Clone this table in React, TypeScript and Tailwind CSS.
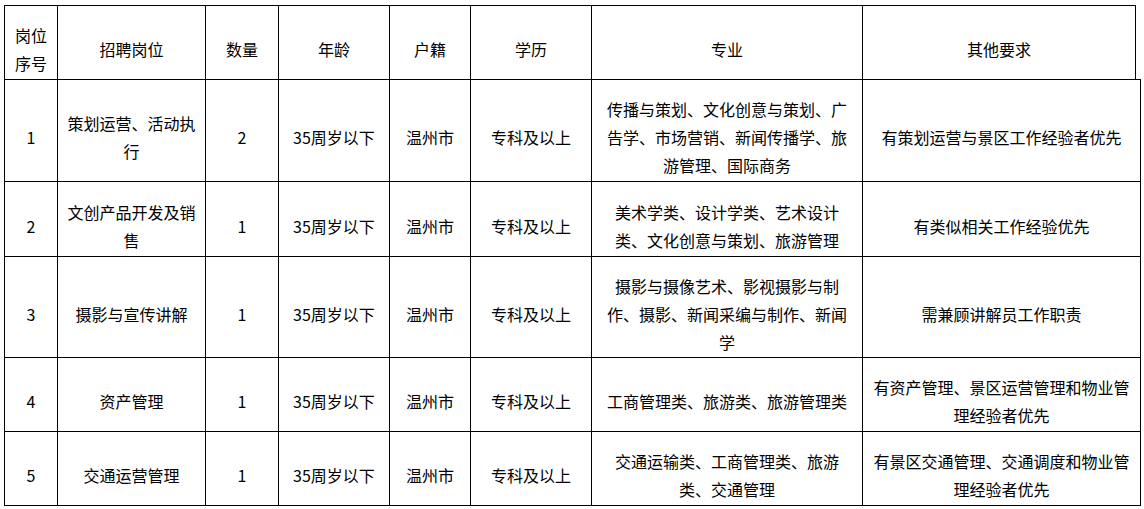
type Row = {
    no: string
    post: string
    count: string
    age: string
    huji: string
    edu: string
    major: string
    other: string
    h: string
}

const rows: Row[] = [
    {
        no: "1",
        post: "策划运营、活动执行",
        count: "2",
        age: "35周岁以下",
        huji: "温州市",
        edu: "专科及以上",
        major: "传播与策划、文化创意与策划、广告学、市场营销、新闻传播学、旅游管理、国际商务",
        other: "有策划运营与景区工作经验者优先",
        h: "h-[102px]",
    },
    {
        no: "2",
        post: "文创产品开发及销售",
        count: "1",
        age: "35周岁以下",
        huji: "温州市",
        edu: "专科及以上",
        major: "美术学类、设计学类、艺术设计类、文化创意与策划、旅游管理",
        other: "有类似相关工作经验优先",
        h: "h-[75px]",
    },
    {
        no: "3",
        post: "摄影与宣传讲解",
        count: "1",
        age: "35周岁以下",
        huji: "温州市",
        edu: "专科及以上",
        major: "摄影与摄像艺术、影视摄影与制作、摄影、新闻采编与制作、新闻学",
        other: "需兼顾讲解员工作职责",
        h: "h-[101px]",
    },
    {
        no: "4",
        post: "资产管理",
        count: "1",
        age: "35周岁以下",
        huji: "温州市",
        edu: "专科及以上",
        major: "工商管理类、旅游类、旅游管理类",
        other: "有资产管理、景区运营管理和物业管理经验者优先",
        h: "h-[74px]",
    },
    {
        no: "5",
        post: "交通运营管理",
        count: "1",
        age: "35周岁以下",
        huji: "温州市",
        edu: "专科及以上",
        major: "交通运输类、工商管理类、旅游类、交通管理",
        other: "有景区交通管理、交通调度和物业管理经验者优先",
        h: "h-[75px]",
    },
]

// text sits a little below the middle of each cell in the original
const cell = "flex items-center justify-center border-t border-r border-black px-2 pt-[13px] text-center"

export default function App() {
    return (
        <div
            className="min-h-screen bg-white pt-[5px] pl-[4px] text-[16px] leading-[28px] text-black"
            style={{ fontFamily: '"Noto Sans CJK SC", "Noto Sans", sans-serif' }}
        >
            <div className="flex h-[74px]">
                <div className={`${cell} w-[54px] border-l`}>岗位序号</div>
                <div className={`${cell} w-[148px]`}>招聘岗位</div>
                <div className={`${cell} w-[73px]`}>数量</div>
                <div className={`${cell} w-[111px]`}>年龄</div>
                <div className={`${cell} w-[81px]`}>户籍</div>
                <div className={`${cell} w-[121px]`}>学历</div>
                <div className={`${cell} w-[271px]`}>专业</div>
                <div className={`${cell} w-[273px]`}>其他要求</div>
            </div>
            {rows.map((r, i) => {
                const last = i === rows.length - 1 ? "border-b" : ""
                return (
                    <div key={r.no} className={`flex ${r.h}`}>
                        <div className={`${cell} ${last} w-[54px] border-l`}>{r.no}</div>
                        <div className={`${cell} ${last} w-[148px]`}>{r.post}</div>
                        <div className={`${cell} ${last} w-[73px]`}>{r.count}</div>
                        <div className={`${cell} ${last} w-[111px]`}>{r.age}</div>
                        <div className={`${cell} ${last} w-[81px]`}>{r.huji}</div>
                        <div className={`${cell} ${last} w-[121px]`}>{r.edu}</div>
                        <div className={`${cell} ${last} w-[271px]`}>{r.major}</div>
                        <div className={`${cell} ${last} w-[278px]`}>{r.other}</div>
                    </div>
                )
            })}
        </div>
    )
}
